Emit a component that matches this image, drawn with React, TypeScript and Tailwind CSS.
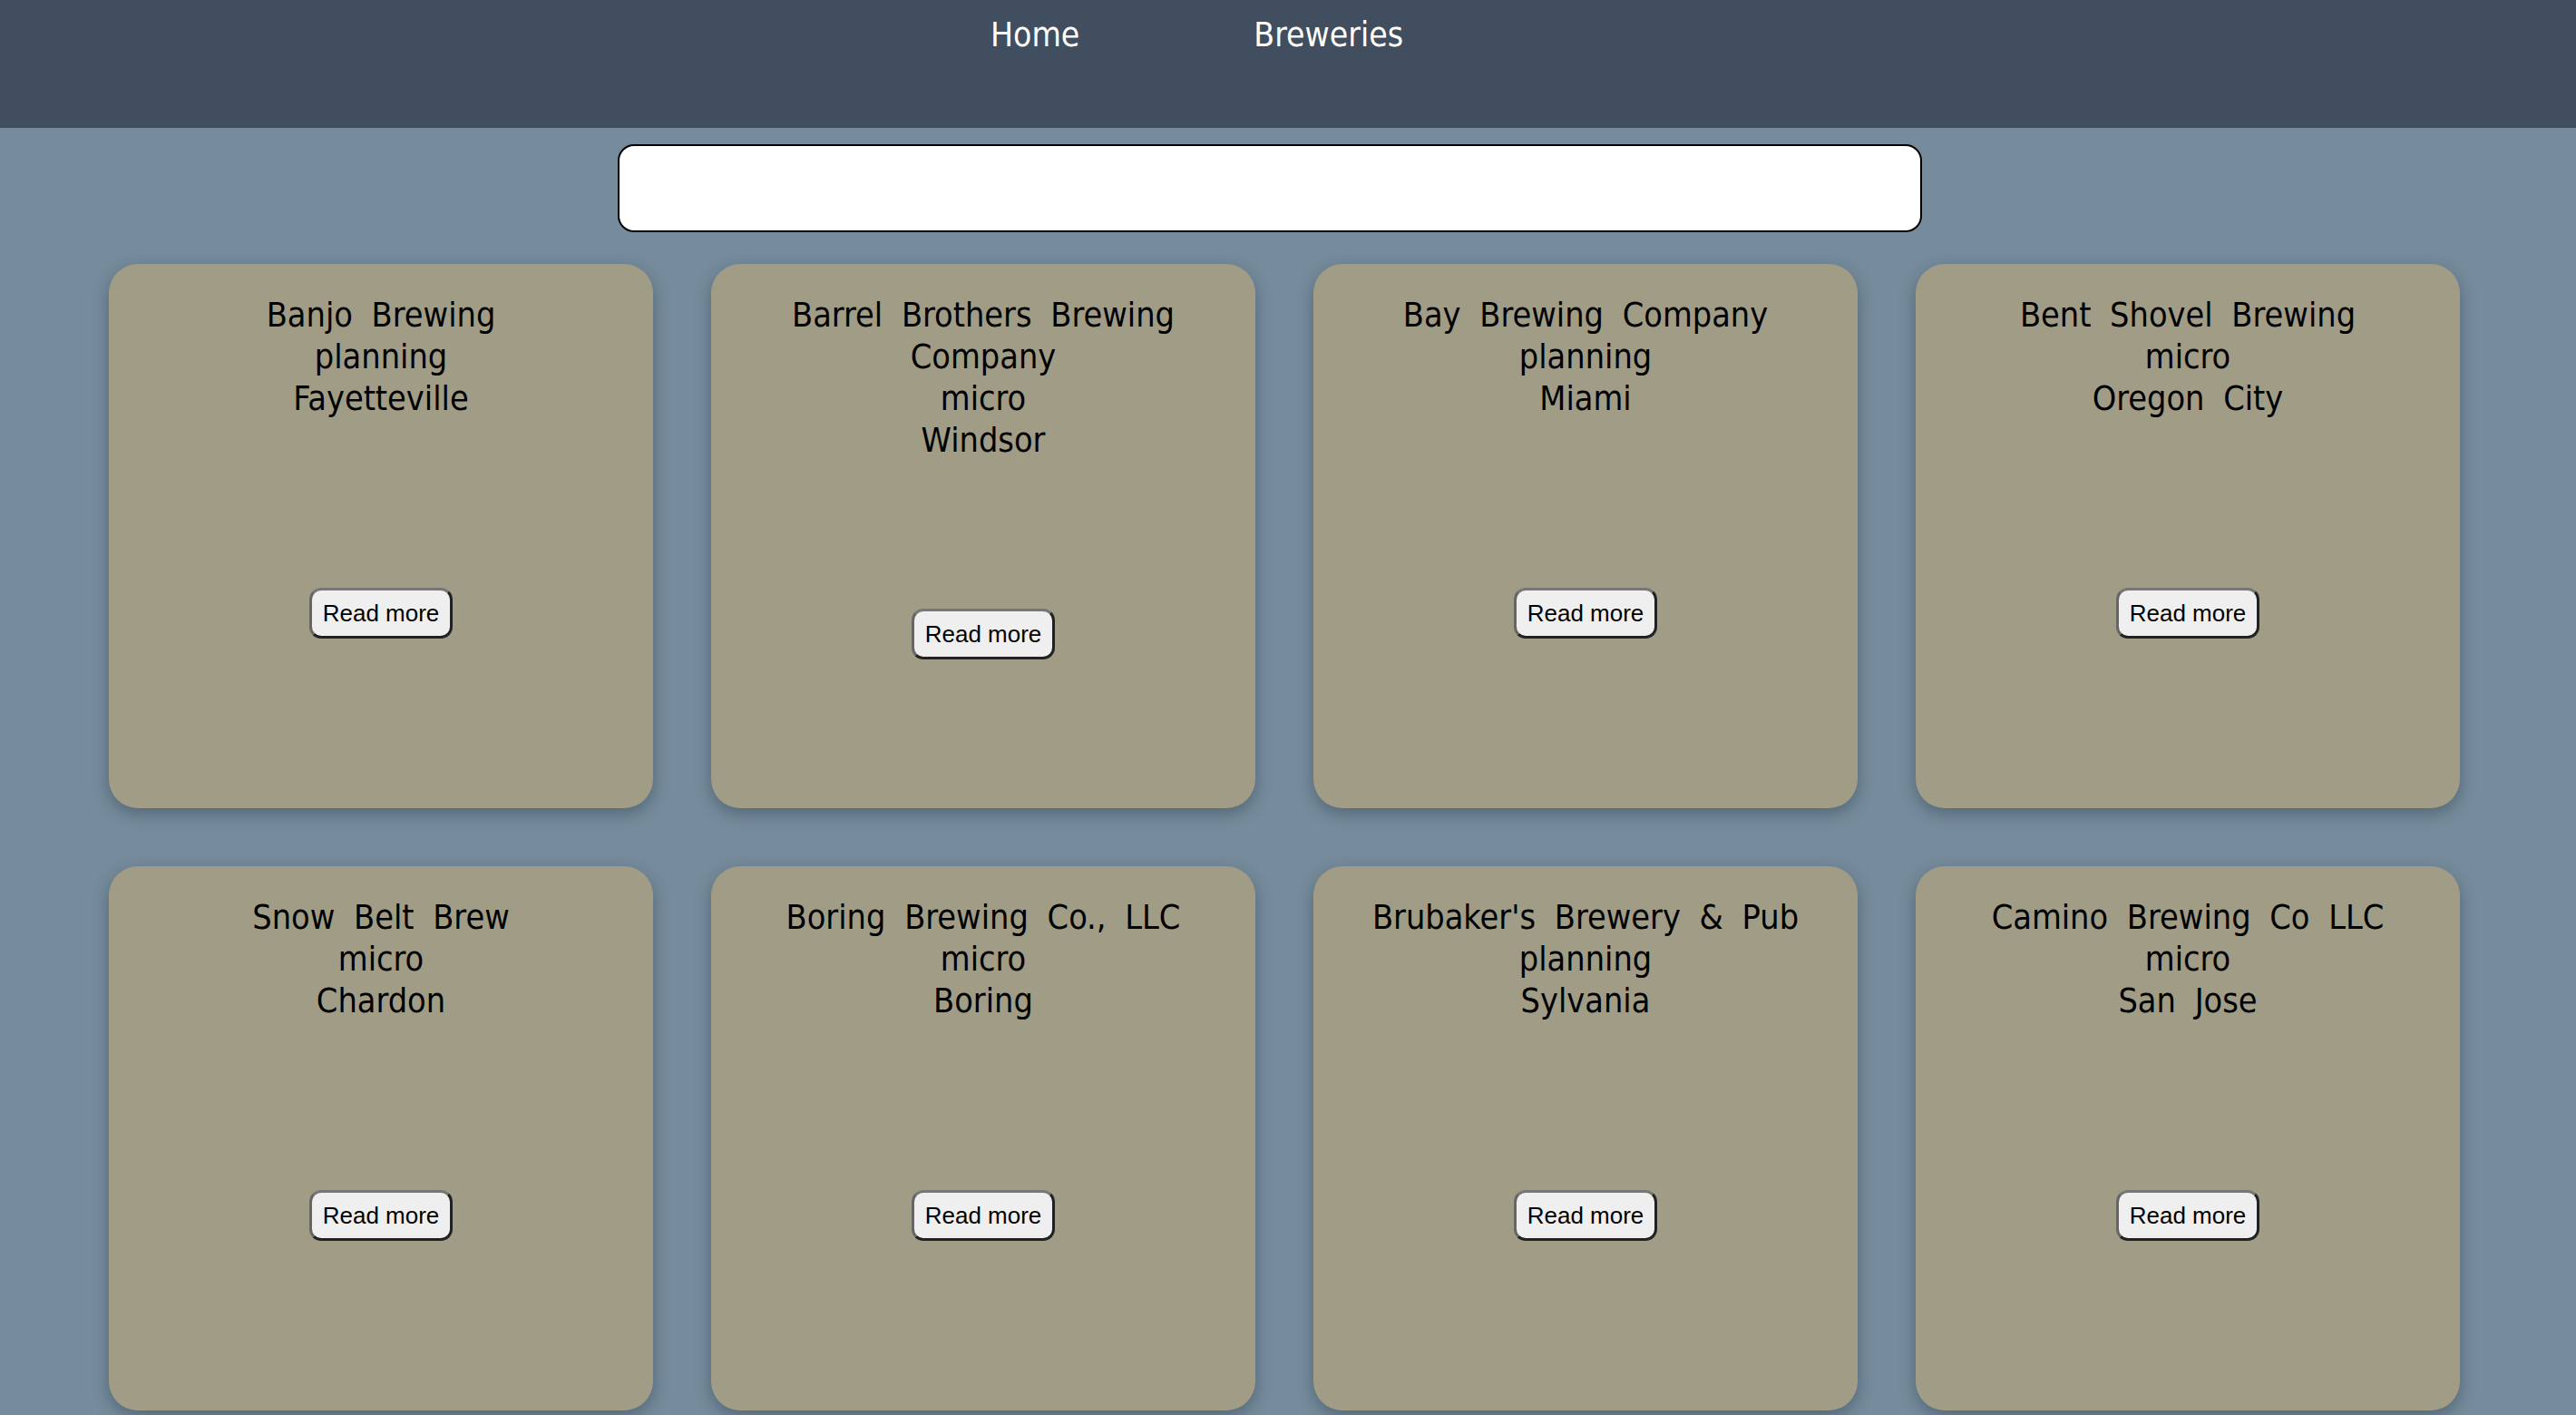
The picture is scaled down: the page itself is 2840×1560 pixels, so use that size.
import React from "react";

const breweries = [
  { name: "Banjo Brewing", type: "planning", city: "Fayetteville" },
  { name: "Barrel Brothers Brewing Company", type: "micro", city: "Windsor" },
  { name: "Bay Brewing Company", type: "planning", city: "Miami" },
  { name: "Bent Shovel Brewing", type: "micro", city: "Oregon City" },
  { name: "Snow Belt Brew", type: "micro", city: "Chardon" },
  { name: "Boring Brewing Co., LLC", type: "micro", city: "Boring" },
  { name: "Brubaker's Brewery & Pub", type: "planning", city: "Sylvania" },
  { name: "Camino Brewing Co LLC", type: "micro", city: "San Jose" },
];

function BreweryCard({ name, type, city }: { name: string; type: string; city: string }) {
  return (
    <div className="flex h-[600px] w-[600px] flex-col rounded-[32px] bg-[#a09c86] px-[50px] pt-[33px] pb-[2px] shadow-[0_6px_18px_rgba(40,55,70,0.45)]">
      <div className="text-center text-[37.5px] leading-[46px] text-black [word-spacing:10px]">
        <div>{name}</div>
        <div>{type}</div>
        <div>{city}</div>
      </div>
      <div className="flex flex-1 items-center justify-center">
        <button className="rounded-[13px] border-[3px] border-t-[#777] border-l-[#666] border-r-[#222] border-b-[#222] bg-[#efefef] px-[12px] py-[10px] font-['Liberation_Sans',Arial,sans-serif] text-[26px] leading-[30px] text-black">
          Read more
        </button>
      </div>
    </div>
  );
}

export default function App() {
  return (
    <div className="min-h-screen bg-[#768c9c] font-['DejaVu_Sans_Condensed','DejaVu_Sans',sans-serif]">
      {/* Top nav */}
      <nav className="h-[141px] bg-[#414e5f]">
        <ul className="flex gap-[192px] pl-[1092px] pt-[16px] text-[37px] leading-[46px] text-white">
          <li>Home</li>
          <li>Breweries</li>
        </ul>
      </nav>

      {/* Search */}
      <div className="pt-[18px] pl-[681px]">
        <input
          type="text"
          className="block h-[97px] w-[1438px] rounded-[18px] border-2 border-black bg-white outline-none"
        />
      </div>

      {/* Cards */}
      <div className="grid grid-cols-[repeat(4,600px)] gap-[64px] pt-[35px] pb-[40px] pl-[120px]">
        {breweries.map((b) => (
          <BreweryCard key={b.name} {...b} />
        ))}
      </div>
    </div>
  );
}
